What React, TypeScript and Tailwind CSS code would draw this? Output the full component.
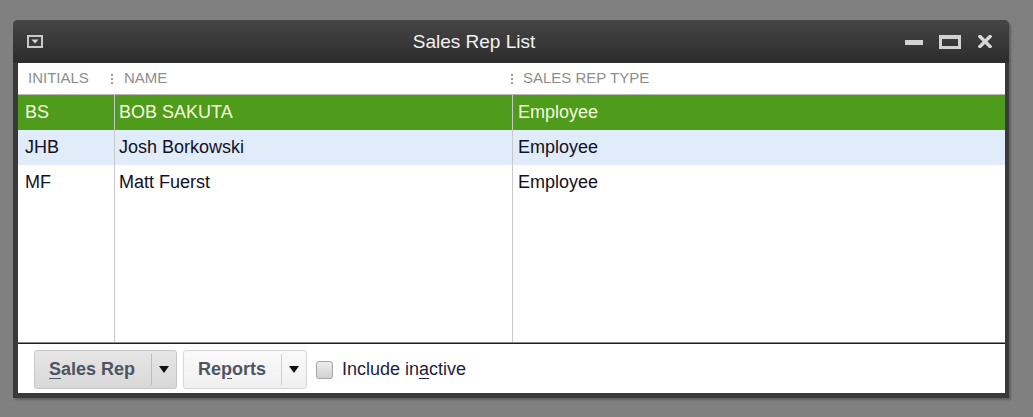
import React from "react";

const reps = [
  { initials: "BS", name: "BOB SAKUTA", type: "Employee" },
  { initials: "JHB", name: "Josh Borkowski", type: "Employee" },
  { initials: "MF", name: "Matt Fuerst", type: "Employee" },
];

function HeaderSep() {
  return (
    <div className="flex w-[2px] flex-col gap-[2px]">
      <div className="h-[2px] w-[2px] bg-[#9a9a9a]" />
      <div className="h-[2px] w-[2px] bg-[#9a9a9a]" />
      <div className="h-[2px] w-[2px] bg-[#9a9a9a]" />
    </div>
  );
}

function Caret() {
  return (
    <svg width="10" height="7" viewBox="0 0 10 7">
      <path d="M0 0 H10 L5 7 Z" fill="#111" />
    </svg>
  );
}

export default function App() {
  return (
    <div
      className="h-[417px] w-full overflow-hidden bg-[#808080] pl-[13px] pt-[20px]"
      style={{ fontFamily: '"Liberation Sans", Arial, sans-serif' }}
    >
      {/* Window */}
      <div className="flex h-[378px] w-[996px] flex-col rounded-t-[5px] bg-[#393939] pb-[5px] shadow-[2px_2px_2px_rgba(0,0,0,0.25)]">
        {/* Title bar */}
        <div className="flex h-[43px] items-center rounded-t-[5px] bg-gradient-to-b from-[#464646] to-[#2c2c2c] pl-[14px] pr-[17px]">
          <svg width="16" height="13" viewBox="0 0 16 13">
            <rect x="1" y="1" width="14" height="11" fill="#3a3a3a" stroke="#c9c9c9" strokeWidth="2" />
            <path d="M4.5 4.5 H11.5 L8 8.5 Z" fill="#d6d6d6" />
          </svg>
          <div className="flex-1 text-center text-[19px] leading-none text-[#f2f2f2]">Sales Rep List</div>
          <div className="flex items-center">
            <div className="mt-[1px] h-[5px] w-[18px] bg-[#d2d2d2]" />
            <div className="ml-[16px] h-[14px] w-[22px] border-[3px] border-t-[4px] border-[#d2d2d2]" />
            <svg className="ml-[17px]" width="14" height="13" viewBox="0 0 14 13">
              <path d="M2 1.5 L12 11.5 M12 1.5 L2 11.5" stroke="#d8d8d8" strokeWidth="3.4" strokeLinecap="square" />
            </svg>
          </div>
        </div>

        {/* Content */}
        <div className="ml-[5px] mr-[4px] flex flex-1 flex-col bg-white">
          {/* Column headers */}
          <div className="flex h-[32px] items-center border-b border-[#b8b8b8] text-[15px] text-[#8e8e8e]">
            <div className="w-[93px] pl-[10px]">INITIALS</div>
            <HeaderSep />
            <div className="w-[398px] pl-[11px]">NAME</div>
            <HeaderSep />
            <div className="pl-[10px]">SALES REP TYPE</div>
          </div>

          {/* Rows */}
          <div className="flex flex-1 flex-col border-b border-[#8a8a8a] text-[18px]">
            {reps.map((rep, i) => (
              <div
                key={rep.initials}
                className={`flex h-[35px] items-center ${
                  i === 0
                    ? "bg-[#4f9b1b] text-[#f5fadf]"
                    : i === 1
                    ? "bg-[#e1ecfb] text-[#111122]"
                    : "bg-white text-[#111122]"
                }`}
              >
                <div className="flex h-full w-[97px] items-center border-r border-[#c9c9c9] pl-[7px]">{rep.initials}</div>
                <div className="flex h-full w-[398px] items-center border-r border-[#c9c9c9] pl-[4px]">{rep.name}</div>
                <div className="flex h-full flex-1 items-center pl-[5px]">{rep.type}</div>
              </div>
            ))}
            <div className="flex flex-1">
              <div className="w-[97px] border-r border-[#c9c9c9]" />
              <div className="w-[398px] border-r border-[#c9c9c9]" />
              <div className="flex-1" />
            </div>
          </div>

          {/* Footer */}
          <div className="flex h-[50px] items-start border-t border-[#1e1e1e] pl-[16px] pt-[6px]">
            <div className="flex h-[39px] w-[143px] rounded-[3px] border border-[#c6c6c6] bg-gradient-to-b from-[#e6e6e6] to-[#d8d8d8]">
              <div className="my-[3px] flex flex-1 items-center border-r border-[#bdbdbd] pl-[14px] text-[18px] font-bold text-[#4e5562]">
                <span className="underline underline-offset-[3px]">S</span>ales Rep
              </div>
              <div className="flex w-[24px] items-center justify-center">
                <Caret />
              </div>
            </div>
            <div className="ml-[6px] flex h-[39px] w-[124px] rounded-[3px] border border-[#d6d6d6] bg-gradient-to-b from-[#fafafa] to-[#f0f0f0]">
              <div className="my-[3px] flex flex-1 items-center border-r border-[#cfcfcf] pl-[14px] text-[18px] font-bold text-[#4e5562]">
                Re<span className="underline underline-offset-[3px]">p</span>orts
              </div>
              <div className="flex w-[24px] items-center justify-center">
                <Caret />
              </div>
            </div>
            <div className="ml-[9px] flex h-[39px] items-center">
              <div className="h-[18px] w-[17px] rounded-[3px] border border-[#a4a4a4] bg-gradient-to-b from-[#ececec] to-[#d2d2d2]" />
              <span className="ml-[9px] text-[18px] text-[#1e1e3a]">
                Include in<span className="underline underline-offset-[3px]">a</span>ctive
              </span>
            </div>
          </div>
        </div>
      </div>
    </div>
  );
}
